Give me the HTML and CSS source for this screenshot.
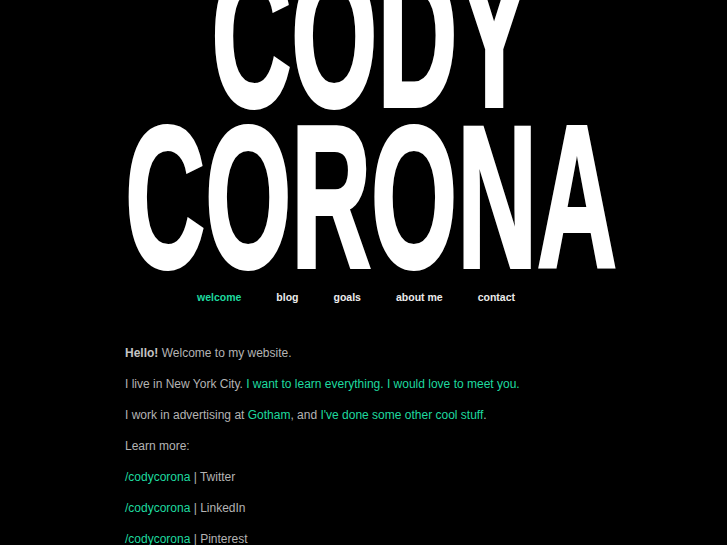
FILE: index.html
```html
<!DOCTYPE html>
<html>
<head>
<meta charset="utf-8">
<link rel="stylesheet" href="styles.css">
</head>
<body>
<div class="page">
  <h1 class="title"><span class="line">CODY</span><span class="line">CORONA</span></h1>
  <nav class="nav">
    <a class="nav-item active" href="#">welcome</a>
    <a class="nav-item" href="#">blog</a>
    <a class="nav-item" href="#">goals</a>
    <a class="nav-item" href="#">about me</a>
    <a class="nav-item" href="#">contact</a>
  </nav>
  <div class="content">
    <p><strong>Hello!</strong> Welcome to my website.</p>
    <p>I live in New York City. <a href="#">I want to learn everything.</a> <a href="#">I would love to meet you.</a></p>
    <p>I work in advertising at <a href="#">Gotham</a>, and <a href="#">I've done some other cool stuff</a>.</p>
    <p>Learn more:</p>
    <p><a href="#">/codycorona</a> | Twitter</p>
    <p><a href="#">/codycorona</a> | LinkedIn</p>
    <p><a href="#">/codycorona</a> | Pinterest</p>
  </div>
</div>
</body>
</html>
```
FILE: styles.css
```css
html, body {
  margin: 0;
  padding: 0;
  background: #000;
  overflow: hidden;
}
body {
  font-family: "Liberation Sans", Arial, sans-serif;
  color: #b4b4b4;
}
.page {
  width: 492px;
  margin-left: 125px;
}
.title {
  margin: -45px 0 0 0;
  display: flex;
  flex-direction: column;
  align-items: center;
  font-family: "Liberation Sans", Arial, sans-serif;
  font-weight: bold;
  font-size: 203px;
  line-height: 161px;
  color: #fff;
}
.line {
  display: block;
  flex: none;
  transform: scaleX(0.545);
  transform-origin: center;
  white-space: nowrap;
  -webkit-text-stroke: 4px #fff;
}
.nav {
  display: flex;
  gap: 35px;
  margin-top: 13px;
  padding-left: 72px;
  font-size: 10.5px;
  line-height: 14px;
  font-weight: bold;
}
.nav-item {
  color: #ececec;
  text-decoration: none;
}
.nav-item.active {
  color: #1ed99f;
}
.content {
  margin-top: 40px;
  font-size: 12px;
}
.content p {
  margin: 0 0 12px 0;
  line-height: 19px;
}
.content strong {
  color: #c4c4c4;
}
.content a {
  color: #1ed99f;
  text-decoration: none;
}
```
